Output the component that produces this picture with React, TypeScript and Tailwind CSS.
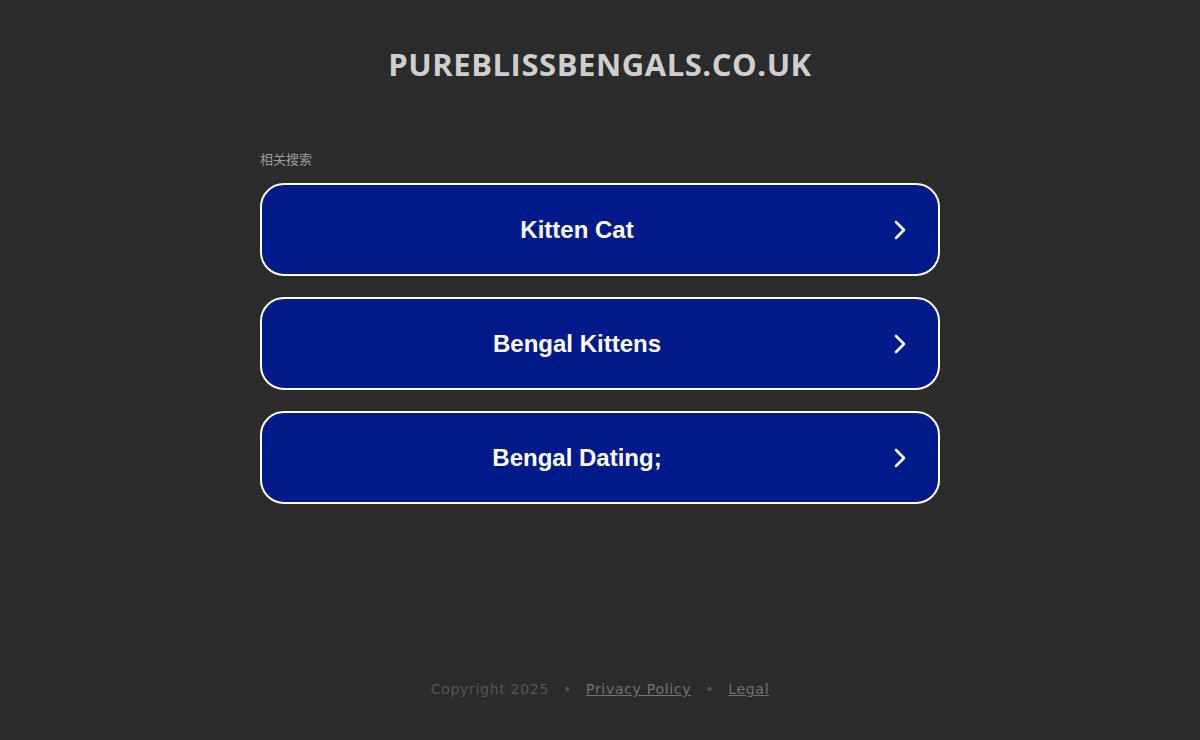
import React from "react";

const links = ["Kitten Cat", "Bengal Kittens", "Bengal Dating;"];

function Chevron() {
  return (
    <svg width="14" height="22" viewBox="0 0 14 22" fill="none" className="shrink-0 ml-[1px]">
      <path d="M3 3l8 8-8 8" stroke="white" strokeWidth="2.6" strokeLinecap="round" strokeLinejoin="round" />
    </svg>
  );
}

export default function App() {
  return (
    <div className="min-h-[740px] bg-[#2b2b2b] flex flex-col items-center font-['Open_Sans',sans-serif]">
      <h1 className="mt-[43px] text-[31px] leading-[42px] font-bold text-[#cfcfcf] tracking-[0.55px]">
        PUREBLISSBENGALS.CO.UK
      </h1>
      <div className="w-[680px] mt-[65px]">
        <div className="text-[13px] leading-[18px] text-[#9a9a9a] font-['Noto_Sans','Noto_Sans_CJK_SC',sans-serif]">
          相关搜索
        </div>
        <div className="mt-[15px] flex flex-col gap-[21px]">
          {links.map((t) => (
            <div
              key={t}
              className="h-[93px] rounded-[24px] border-2 border-white bg-[#011a8a] flex items-center pr-[31px] pt-[1px]"
            >
              <span className="flex-1 text-center text-white text-[24px] font-bold font-['Liberation_Sans',Arial,sans-serif]">
                {t}
              </span>
              <Chevron />
            </div>
          ))}
        </div>
      </div>
      <div className="mt-auto mb-[40px] flex items-center gap-[14px] text-[14px] tracking-[0.7px] text-[#555] font-['DejaVu_Sans',sans-serif] pt-[150px]">
        <span>Copyright 2025</span>
        <span>•</span>
        <span className="underline text-[#727272]">Privacy Policy</span>
        <span>•</span>
        <span className="underline text-[#727272]">Legal</span>
      </div>
    </div>
  );
}
